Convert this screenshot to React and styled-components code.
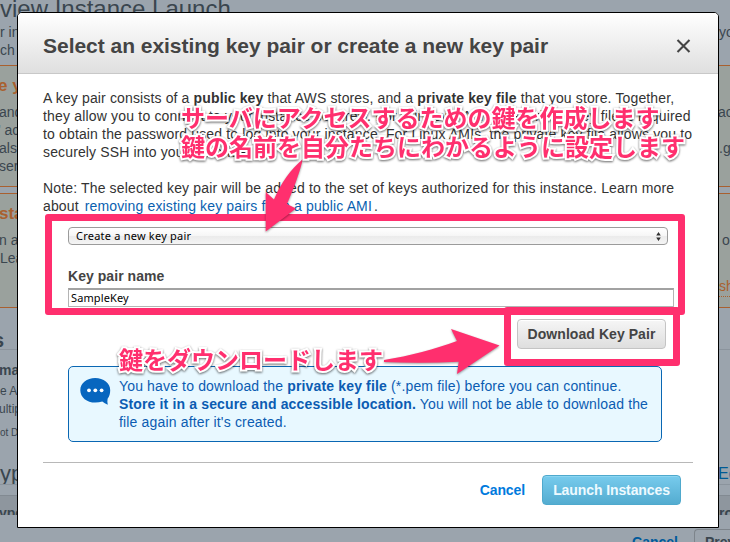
import React from 'react';
import styled, { createGlobalStyle } from 'styled-components';

const PINK = '#ff2f6e';

const GlobalStyle = createGlobalStyle`
  * { box-sizing: border-box; }
  html, body { margin: 0; padding: 0; }
  body { font-family: "Liberation Sans", Arial, sans-serif; }
`;

const Screen = styled.div`
  position: relative;
  width: 730px;
  height: 542px;
  overflow: hidden;
  background: #9ba4ad;
`;

/* ---------- dimmed page behind the dialog ---------- */

const BackPage = styled.div`
  display: flex;
  flex-direction: column;
  height: 542px;
  overflow: hidden;
`;

const BackSection = styled.div`
  flex: none;
  height: ${(p) => p.$height}px;
  padding-top: ${(p) => p.$pad || 0}px;
  background: ${(p) => p.$bg || 'transparent'};
  border-top: ${(p) => (p.$line ? `1px solid ${p.$line}` : 'none')};
  border-bottom: ${(p) => (p.$end ? `1px solid ${p.$end}` : 'none')};
  overflow: hidden;
`;

const BackLine = styled.div`
  display: grid;
  grid-template-columns: 719px 1fr;
  height: ${(p) => p.$height || 18}px;
  line-height: ${(p) => p.$height || 18}px;
  font-size: ${(p) => p.$size || 14}px;
  font-weight: ${(p) => (p.$bold ? 700 : 400)};
  color: ${(p) => p.$color || '#3a464f'};
  white-space: nowrap;
`;

const Fragment = styled.span`
  text-indent: ${(p) => p.$shift || 0}px;
  color: ${(p) => p.$color || 'inherit'};
`;

const SmallLink = styled.span`
  font-size: 16px;
  text-indent: -1px;
  color: #005a94;
`;

const DottedLink = styled.span`
  height: 18px;
  color: #a9602f;
  border-bottom: 1px dotted #a9602f;
  line-height: 15px;
  overflow: hidden;
`;

const BackFooter = styled.div`
  display: flex;
  justify-content: flex-end;
  padding-top: 14px;
`;

const BackCancel = styled.span`
  margin: 4px 16px 0 0;
  font: 700 14px/18px "Liberation Sans", Arial, sans-serif;
  color: #005a9b;
`;

const BackPrevious = styled.span`
  width: 36px;
  height: 30px;
  padding: 3px 0 0 10px;
  border: 1px solid #7d848b;
  border-right: 0;
  border-radius: 4px 0 0 0;
  font: 700 14px/18px "Liberation Sans", Arial, sans-serif;
  color: #3a464f;
  overflow: hidden;
`;

/* ---------- dialog ---------- */

const Dialog = styled.section`
  position: absolute;
  left: 17px;
  top: 12px;
  width: 702px;
  height: 516px;
  display: flex;
  flex-direction: column;
  background: #fff;
  border: 1px solid #000;
  border-radius: 5px 5px 0 0;
  overflow: hidden;
`;

const DialogHeader = styled.header`
  flex: none;
  display: flex;
  align-items: center;
  justify-content: space-between;
  height: 61px;
  padding: 6px 27px 0 25px;
  background: linear-gradient(#ffffff, #dfdfdf);
  border-bottom: 1px solid #c8c8c8;
`;

const Title = styled.h1`
  margin: 0;
  font-size: 21px;
  line-height: 26px;
  letter-spacing: -0.03px;
  color: #444;
  white-space: nowrap;
`;

const CloseButton = styled.button`
  display: flex;
  padding: 0;
  border: 0;
  margin-top: 0;
  background: none;
`;

const Paragraph = styled.p`
  margin: ${(p) => p.$top}px 0 0 25px;
  font-size: 14px;
  line-height: 18px;
  color: #333;
  white-space: nowrap;
`;

const TextLine = styled.span`
  display: block;
  letter-spacing: ${(p) => p.$spacing || 0.14}px;
`;

const Link = styled.a`
  margin-left: 2px;
  margin-right: 2px;
  color: #0a5fb0;
`;

const Form = styled.div`
  display: flex;
  flex-direction: column;
  margin: 12px 44px 0 50px;
`;

const Select = styled.div`
  display: flex;
  align-items: center;
  justify-content: space-between;
  width: 600px;
  height: 18px;
  padding: 0 6px 0 7px;
  border: 1px solid #9b9b9b;
  border-radius: 4px;
  background: linear-gradient(#fff 0%, #f6f6f6 48%, #ebebeb 52%, #f4f4f4 100%);
  font: 11px/16px "Noto Sans", sans-serif;
  letter-spacing: 0.22px;
  color: #000;
`;

const Label = styled.label`
  margin-top: 22px;
  font-size: 14px;
  font-weight: 700;
  line-height: 18px;
  letter-spacing: 0.05px;
  color: #444;
`;

const Input = styled.div`
  width: 606px;
  height: 19px;
  margin-top: 3px;
  padding-left: 2px;
  border: 1px solid #b4b4b4;
  border-top: 2px solid #a2a2a2;
  font: 11px/16px "Noto Sans", sans-serif;
  letter-spacing: 0.12px;
  color: #000;
`;

const Button = styled.button`
  flex: none;
  width: ${(p) => p.$width}px;
  height: 30px;
  padding: 0;
  border: 1px solid ${(p) => (p.$primary ? '#4fa9cd' : '#c4c4c4')};
  border-radius: 4px;
  background: ${(p) =>
    p.$primary ? 'linear-gradient(#77cbed, #54acd0)' : 'linear-gradient(#f6f6f6, #dedede)'};
  box-shadow: inset 0 1px 0 ${(p) => (p.$primary ? '#8bd5f1' : '#fff')};
  font: 700 14px/18px "Liberation Sans", Arial, sans-serif;
  letter-spacing: ${(p) => (p.$primary ? -0.1 : 0.06)}px;
  color: ${(p) => (p.$primary ? '#eefaff' : '#444')};
  white-space: nowrap;
`;

const DownloadRow = styled.div`
  display: flex;
  justify-content: flex-end;
  margin: 12px 52px 0 0;
`;

const Notice = styled.div`
  flex: none;
  display: flex;
  width: 594px;
  height: 76px;
  margin: 17px 0 0 50px;
  padding: 10px 0 0 11px;
  gap: 8px;
  border: 1px solid #0a67b3;
  border-radius: 5px;
  background: #e8f8ff;
`;

const NoticeText = styled.div`
  font-size: 14px;
  line-height: 18px;
  color: #0b5cb2;
  white-space: nowrap;
`;

const DialogFooter = styled.footer`
  flex: none;
  display: flex;
  justify-content: flex-end;
  align-items: center;
  gap: 17px;
  height: 55px;
  margin: 20px 25px 0;
  padding-right: 12px;
  border-top: 1px solid #b8b8b8;
`;

const CancelLink = styled.a`
  font-size: 14px;
  font-weight: 700;
  line-height: 18px;
  letter-spacing: -0.1px;
  color: #007add;
`;

/* ---------- annotations drawn over the dialog ---------- */

const Frame = styled.div`
  position: absolute;
  left: ${(p) => p.$x}px;
  top: ${(p) => p.$y}px;
  width: ${(p) => p.$w}px;
  height: ${(p) => p.$h}px;
  border: 7px solid ${PINK};
  border-radius: 3px;
`;

const Arrows = styled.svg`
  position: absolute;
  left: 0;
  top: 0;
  filter: drop-shadow(0 1px 1px rgba(0, 0, 0, 0.4));
`;

const Callout = styled.div`
  position: absolute;
  left: ${(p) => p.$x}px;
  top: ${(p) => p.$y}px;
  font: 700 24px/29px "Noto Sans CJK JP", sans-serif;
  color: ${PINK};
  white-space: nowrap;
  -webkit-text-stroke: 4px #fff;
  paint-order: stroke fill;
  filter: drop-shadow(0 1px 1.2px rgba(0, 0, 0, 0.6));
`;

const ORANGE = '#a9602f';
const BOX = '#9aa19d';

function Background() {
  return (
    <BackPage>
      <BackSection $height={65}>
        <BackLine $height={18} $size={24}>
          <Fragment>view Instance Launch</Fragment>
        </BackLine>
        <BackLine $height={5} />
        <BackLine>
          <Fragment>r in</Fragment>
          <Fragment>your</Fragment>
        </BackLine>
        <BackLine>
          <Fragment>ch</Fragment>
        </BackLine>
      </BackSection>
      <BackSection $height={122} $pad={9} $bg={BOX} $line={ORANGE} $end={ORANGE}>
        <BackLine $size={17} $bold $color={ORANGE} $height={22}>
          <Fragment $shift={-2}>e your</Fragment>
        </BackLine>
        <BackLine $height={6} />
        <BackLine>
          <Fragment $shift={-1}>and</Fragment>
          <Fragment $shift={-1}>ac</Fragment>
        </BackLine>
        <BackLine>
          <Fragment $shift={-2}>' ac</Fragment>
        </BackLine>
        <BackLine>
          <Fragment $shift={-1}>als</Fragment>
          <Fragment $shift={0}>.g</Fragment>
        </BackLine>
        <BackLine>
          <Fragment $shift={-1}>serv</Fragment>
        </BackLine>
      </BackSection>
      <BackSection $height={6} />
      <BackSection $height={115} $pad={9} $bg={BOX} $line={ORANGE} $end={ORANGE}>
        <BackLine $size={17} $bold $color={ORANGE} $height={22}>
          <Fragment $shift={-1}>stan</Fragment>
        </BackLine>
        <BackLine $height={6} />
        <BackLine>
          <Fragment $shift={-1}>n a</Fragment>
          <Fragment $shift={3}>o</Fragment>
        </BackLine>
        <BackLine>
          <Fragment>Lea</Fragment>
        </BackLine>
        <BackLine $height={12} />
        <BackLine $height={18}>
          <span />
          <DottedLink>sh</DottedLink>
        </BackLine>
      </BackSection>
      <BackSection $height={41} $pad={18}>
        <BackLine $size={20} $bold $height={28}>
          <Fragment $shift={-7}>s</Fragment>
        </BackLine>
      </BackSection>
      <BackSection $height={135} $pad={11} $line="#8b949d">
        <BackLine $bold>
          <Fragment $shift={-1}>maz</Fragment>
        </BackLine>
        <BackLine $height={3} />
        <BackLine $size={12}>
          <Fragment>e A</Fragment>
        </BackLine>
        <BackLine $size={12}>
          <Fragment $shift={-1}>ultip</Fragment>
        </BackLine>
        <BackLine $height={6} />
        <BackLine $size={10}>
          <Fragment>ot D</Fragment>
        </BackLine>
        <BackLine $height={19} />
        <BackLine $size={22} $height={26}>
          <Fragment>yp</Fragment>
          <SmallLink>Ed</SmallLink>
        </BackLine>
      </BackSection>
      <BackSection $height={11} $line="#8b949d" />
      <BackSection $height={20} $pad={8} $bg="#8e969e" $line="#828a92">
        <BackLine $size={14} $bold>
          <Fragment $shift={-1}>ype</Fragment>
          <Fragment>ro</Fragment>
        </BackLine>
      </BackSection>
      <BackFooter>
        <BackCancel>Cancel</BackCancel>
        <BackPrevious>Previous</BackPrevious>
      </BackFooter>
    </BackPage>
  );
}

function SpeechBubble() {
  return (
    <svg width="31" height="29" viewBox="0 0 31 29">
      <path
        d="M15.2 1C6.9 1 0.300 6 0.300 13.200S6.900 25.600 15.200 25.600c2.600 0 5-.3 7.100-1 1.500 1.300 3.400 2.400 5.500 3.200-.5-2-.6-4-.2-6 1.700-2.200 2.600-5 2.600-8.600C30.200 6 23.500 1 15.200 1z"
        fill="#0766bf"
      />
      <circle cx="9" cy="13.300" r="1.900" fill="#fff" />
      <circle cx="15.300" cy="13.300" r="1.900" fill="#fff" />
      <circle cx="21.600" cy="13.300" r="1.900" fill="#fff" />
    </svg>
  );
}

export default function App() {
  return (
    <Screen>
      <GlobalStyle />
      <Background />

      <Dialog>
        <DialogHeader>
          <Title>Select an existing key pair or create a new key pair</Title>
          <CloseButton aria-label="Close">
            <svg width="15" height="14" viewBox="0 0 15 14">
              <path d="M1.500 1l12 12M13.500 1l-12 12" stroke="#444" strokeWidth="2.100" />
            </svg>
          </CloseButton>
        </DialogHeader>

        <Paragraph $top={15}>
          <TextLine $spacing={0.14}>
            A key pair consists of a <b>public key</b> that AWS stores, and a <b>private key file</b>{' '}
            that you store. Together,
          </TextLine>
          <TextLine $spacing={0.18}>
            they allow you to connect to your instance securely. For Windows AMIs, the private key
            file is required
          </TextLine>
          <TextLine $spacing={0.15}>
            to obtain the password used to log into your instance. For Linux AMIs, the private key
            file allows you to
          </TextLine>
          <TextLine>securely SSH into your instance.</TextLine>
        </Paragraph>
        <Paragraph $top={18}>
          <TextLine $spacing={0.15}>
            Note: The selected key pair will be added to the set of keys authorized for this
            instance. Learn more
          </TextLine>
          <TextLine>
            about <Link>removing existing key pairs from a public AMI</Link>.
          </TextLine>
        </Paragraph>

        <Form>
          <Select>
            Create a new key pair
            <svg width="5" height="9" viewBox="0 0 5 9">
              <path d="M2.500 0L4.800 3.400H.2zM2.500 9L.2 5.600h4.600z" fill="#333" />
            </svg>
          </Select>
          <Label>Key pair name</Label>
          <Input>SampleKey</Input>
        </Form>

        <DownloadRow>
          <Button $width={149}>Download Key Pair</Button>
        </DownloadRow>

        <Notice>
          <SpeechBubble />
          <NoticeText>
            <TextLine $spacing={0.15}>
              You have to download the <b>private key file</b> (*.pem file) before you can continue.
            </TextLine>
            <TextLine $spacing={0.15}>
              <b>Store it in a secure and accessible location.</b> You will not be able to download
              the
            </TextLine>
            <TextLine $spacing={0.16}>file again after it's created.</TextLine>
          </NoticeText>
        </Notice>

        <DialogFooter>
          <CancelLink>Cancel</CancelLink>
          <Button $primary $width={139}>
            Launch Instances
          </Button>
        </DialogFooter>
      </Dialog>

      <Frame $x={45} $y={213.5} $w={640} $h={101.5} />
      <Frame $x={504} $y={307} $w={176} $h={59} />
      <Arrows width="730" height="542" viewBox="0 0 730 542">
        <path
          d="M303 159C291 169 281 183 274 199.500L265.700 192V231.500L296 208.500L287 204C293 190 299 175 303 159z"
          fill={PINK}
        />
        <path
          d="M384 360C410 356 435 349 457 341L451 329L499.500 345.500L457 374L458.700 361.700C434 363 408 363 384 362z"
          fill={PINK}
        />
      </Arrows>
      <Callout $x={181} $y={102}>
        サーバにアクセスするための鍵を作成します
      </Callout>
      <Callout $x={181} $y={131}>
        鍵の名前を自分たちにわかるように設定します
      </Callout>
      <Callout $x={119} $y={344}>
        鍵をダウンロードします
      </Callout>
    </Screen>
  );
}
